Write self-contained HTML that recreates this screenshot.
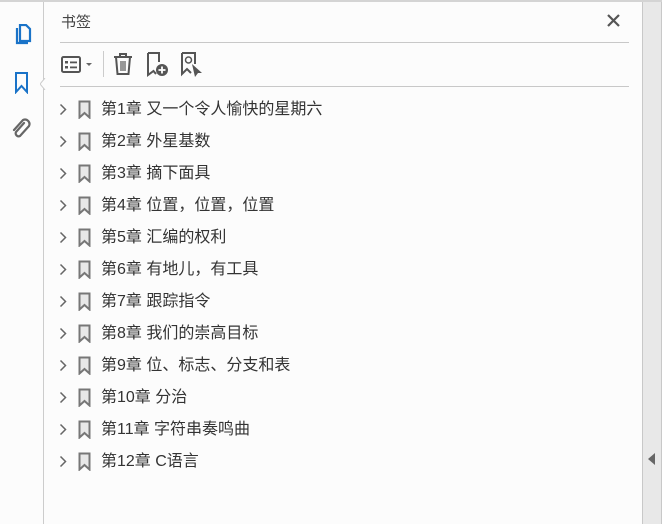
<!DOCTYPE html>
<html><head><meta charset="utf-8"><style>
*{margin:0;padding:0;box-sizing:border-box}
body{width:662px;height:524px;overflow:hidden;background:#fcfcfc;position:relative;font-family:"Liberation Sans","Noto Sans CJK SC",sans-serif;color:#333}
.top{position:absolute;left:0;top:0;width:662px;height:2px;background:#d4d4d4}
.side{position:absolute;left:0;top:2px;width:44px;height:522px;background:#fcfcfc;border-right:1px solid #ccc}
.rstrip{position:absolute;left:642px;top:2px;width:20px;height:522px;background:#e8e8e8;border-left:1px solid #c8c8c8;border-right:1px solid #c8c8c8}
.title{position:absolute;left:61px;top:11px;font-size:15px;color:#444}
.hr{position:absolute;left:60px;width:569px;height:1px;background:#c8c8c8}
.row{position:absolute;left:0;height:32px;width:600px}
.row .t{position:absolute;left:101px;top:0;font-size:16px;line-height:20px;color:#333;white-space:nowrap}
.row svg{position:absolute}
</style></head><body>
<div class="top"></div>
<div class="side">
<svg style="position:absolute;left:12px;top:22px" width="22" height="24" viewBox="0 0 22 24"><path d="M5 4v15h11" fill="none" stroke="#1a73c8" stroke-width="2.2"/><path d="M8 1h6l4 4v12H8z" fill="none" stroke="#1a73c8" stroke-width="2.2"/></svg>
<svg style="position:absolute;left:14px;top:70px" width="16" height="22" viewBox="0 0 16 22"><path d="M2 1h11v19l-5.5-6L2 20z" fill="none" stroke="#1a73c8" stroke-width="2"/></svg>
<svg style="position:absolute;left:40px;top:76px" width="6" height="12" viewBox="0 0 6 12"><path d="M5 0L0 6l5 6" fill="#fcfcfc" stroke="#ccc"/></svg>
<svg style="position:absolute;left:11px;top:116px" width="22" height="24" viewBox="0 0 22 24"><path d="M13 5l-8 9a3 3 0 0 0 4 4l9-10a4.5 4.5 0 0 0-6-6L3 12" fill="none" stroke="#666" stroke-width="2.2" stroke-linecap="round"/></svg>
</div>
<div class="rstrip"><svg style="position:absolute;left:5px;top:451px" width="8" height="12"><path d="M7 0L0 6l7 6z" fill="#666"/></svg></div>
<div class="title">书签</div>
<svg style="position:absolute;left:607px;top:14px" width="13" height="13" viewBox="0 0 13 13"><path d="M1 1l11 11M12 1L1 12" stroke="#555" stroke-width="2.2"/></svg>
<div class="hr" style="top:42px"></div>
<div class="hr" style="top:86px"></div>
<svg style="position:absolute;left:61px;top:55px" width="36" height="20" viewBox="0 0 36 20"><rect x="1" y="2" width="18" height="15" rx="1.5" fill="none" stroke="#555" stroke-width="2"/><rect x="4" y="6" width="3" height="2.5" fill="#555"/><rect x="4" y="11" width="3" height="2.5" fill="#555"/><rect x="9" y="6.5" width="7" height="1.8" fill="#555"/><rect x="9" y="11.5" width="7" height="1.8" fill="#555"/><path d="M25 8h6l-3 3z" fill="#666"/></svg>
<div style="position:absolute;left:103px;top:51px;width:1px;height:26px;background:#ccc"></div>
<svg style="position:absolute;left:112px;top:52px" width="22" height="24" viewBox="0 0 22 24"><path d="M2 5h18M8 5V2h6v3M4 5l1.5 17h11L18 5" fill="none" stroke="#555" stroke-width="2"/><path d="M9 9v10M11 9v10M13 9v10" stroke="#555" stroke-width="1.2"/></svg>
<svg style="position:absolute;left:146px;top:52px" width="24" height="26" viewBox="0 0 24 26"><path d="M2 1h11v9M10 22l-2.5-3L2 23V1" fill="none" stroke="#555" stroke-width="2"/><circle cx="16" cy="18" r="6" fill="#555"/><path d="M16 14.5v7M12.5 18h7" stroke="#fff" stroke-width="1.8"/></svg>
<svg style="position:absolute;left:180px;top:52px" width="24" height="26" viewBox="0 0 24 26"><path d="M2 1h13v11M2 1v21l5-5 4 4" fill="none" stroke="#555" stroke-width="2"/><circle cx="8.5" cy="8" r="3" fill="none" stroke="#555" stroke-width="1.5"/><path d="M12 12l10 9h-4l-3 4z" fill="#555"/></svg>
<div id="rows"></div>
<script>
const t=["第1章 又一个令人愉快的星期六","第2章 外星基数","第3章 摘下面具","第4章 位置，位置，位置","第5章 汇编的权利","第6章 有地儿，有工具","第7章 跟踪指令","第8章 我们的崇高目标","第9章 位、标志、分支和表","第10章 分治","第11章 字符串奏鸣曲","第12章 C语言"];
let h="";t.forEach((s,i)=>{const y=100+i*32;h+=`<div class="row" style="top:${y}px"><svg style="left:59px;top:3px" width="8" height="13" viewBox="0 0 8 13"><path d="M1.5 1.5l5 5-5 5" fill="none" stroke="#666" stroke-width="1.5"/></svg><svg style="left:78px;top:0px" width="13" height="19" viewBox="0 0 13 19"><path d="M1.5 1.5h10v16l-5-4.5-5 4.5z" fill="#e8e8e8" stroke="#777" stroke-width="2"/></svg><div class="t">${s}</div></div>`});
document.getElementById("rows").innerHTML=h;
</script>
</body></html>
